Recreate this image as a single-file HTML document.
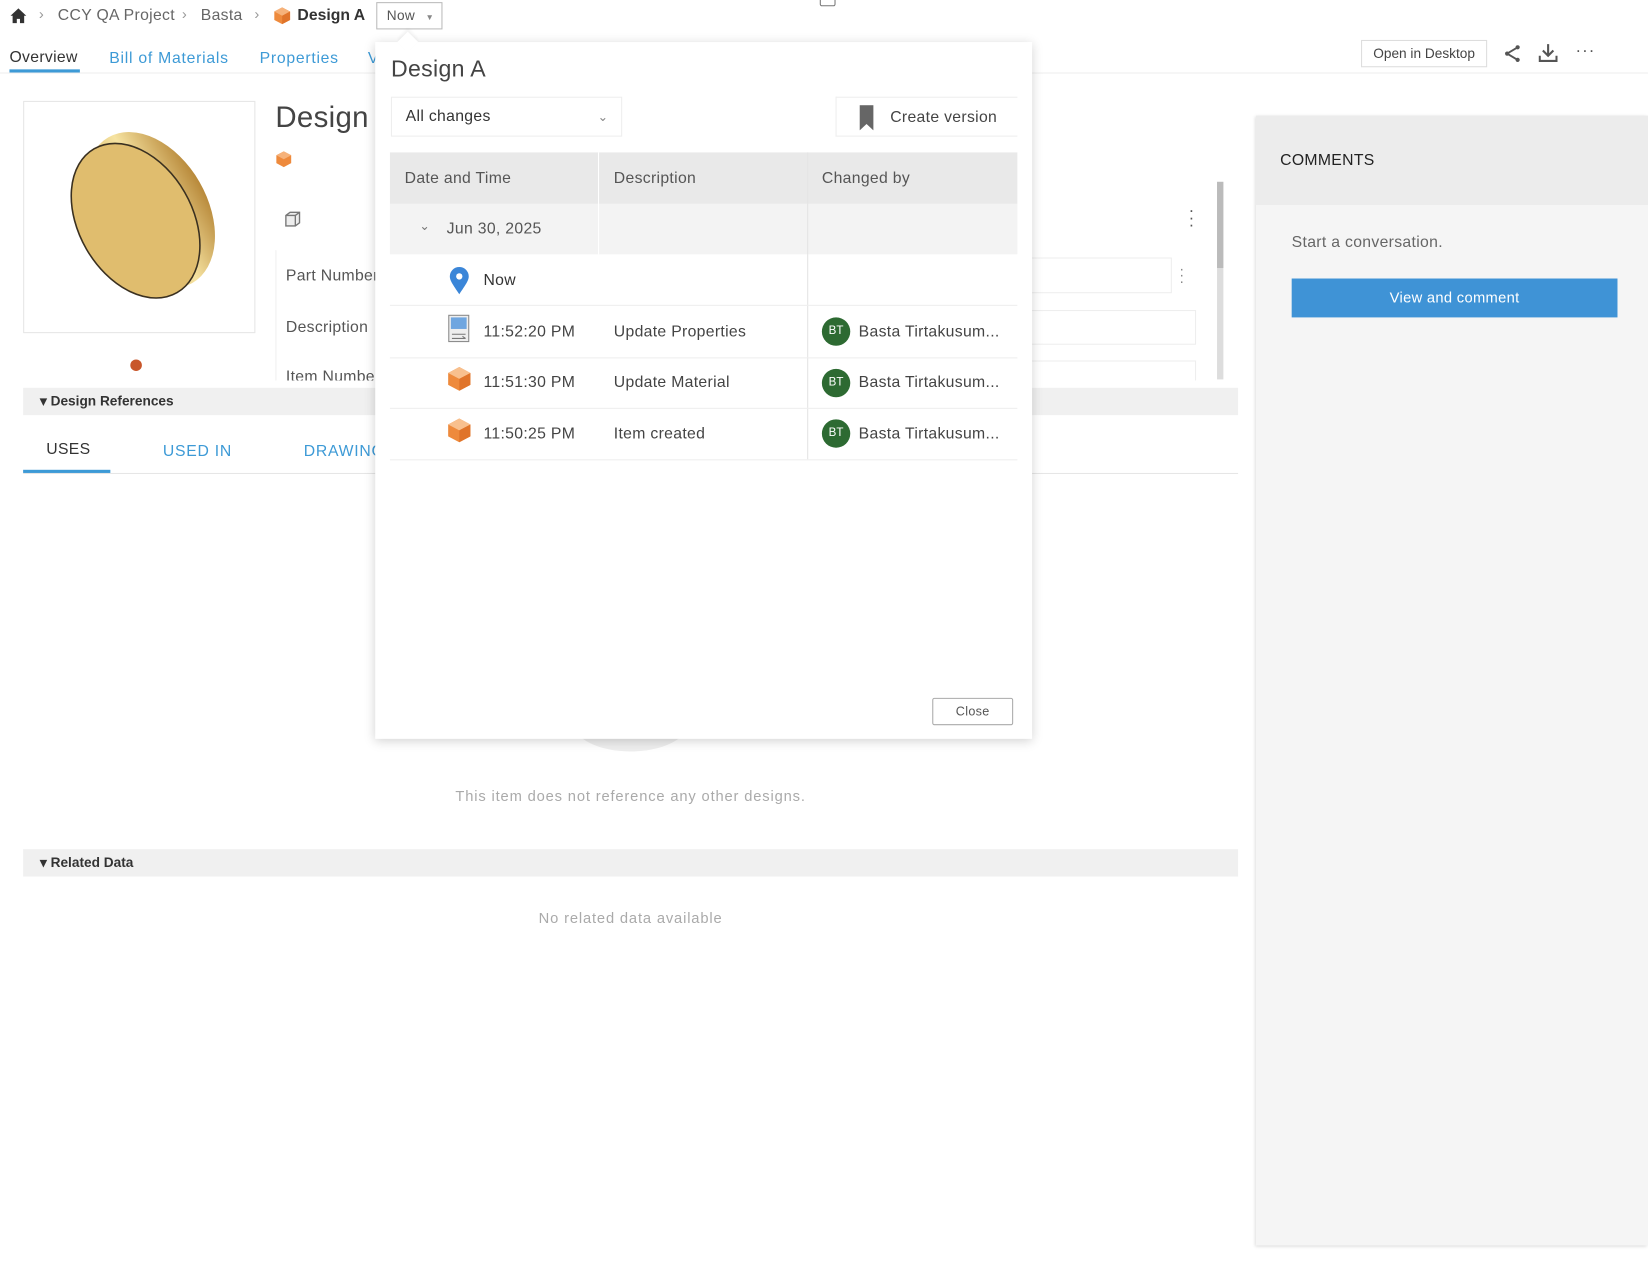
<!DOCTYPE html>
<html><head><meta charset="utf-8"><style>
html,body{margin:0;padding:0;background:#fff;overflow:hidden}
body{width:1648px;height:1266px;position:relative}
#s{position:absolute;left:0;top:0;width:1568px;height:1205px;transform:scale(1.0510);transform-origin:0 0;font-family:"Liberation Sans",sans-serif;color:#3c3c3c;font-size:15px;letter-spacing:0.3px}
.a{position:absolute;white-space:nowrap}
.blue{color:#3d9ad6;letter-spacing:0.7px}
.g{color:#999}
</style></head><body><div id="s">

<!-- breadcrumb -->
<svg class="a" style="left:9px;top:7px" width="17" height="16" viewBox="0 0 17 16"><path d="M8.5 1 L1 8 H3 V15 H7 V11 H10 V15 H14 V8 H16 Z" fill="#333"/></svg>
<div class="a g" style="left:37px;top:5px;font-size:14px">›</div>
<div class="a" style="left:55px;top:6px;color:#666">CCY QA Project</div>
<div class="a g" style="left:173px;top:5px;font-size:14px">›</div>
<div class="a" style="left:191px;top:6px;color:#666">Basta</div>
<div class="a g" style="left:242px;top:5px;font-size:14px">›</div>
<svg class="a" style="left:260px;top:6px" width="17" height="18" viewBox="0 0 17 18"><path d="M8.5 1 L16 5 V13 L8.5 17 L1 13 V5Z" fill="#ee8a3c"/><path d="M8.5 1 L16 5 L8.5 9 L1 5Z" fill="#f6b27a"/><path d="M8.5 9 L16 5 V13 L8.5 17Z" fill="#e0742a"/></svg>
<div class="a" style="left:283px;top:6px;font-weight:bold;color:#333;letter-spacing:0">Design A</div>
<div class="a" style="left:358px;top:2px;width:63px;height:26px;border:1px solid #bbb;box-sizing:border-box;font-size:13px;color:#555;line-height:24px;padding-left:9px">Now <span style="font-size:8px;color:#888;margin-left:6px">▼</span></div>
<div class="a" style="left:780px;top:-2px;width:13px;height:6px;border:1px solid #777;border-radius:2px"></div>

<!-- tabs -->
<div class="a" style="left:0;top:69px;width:1568px;height:1px;background:#eee"></div>
<div class="a" style="left:9px;top:46px;color:#333">Overview</div>
<div class="a" style="left:9px;top:66px;width:67px;height:3px;background:#3d9ad6"></div>
<div class="a blue" style="left:104px;top:47px">Bill of Materials</div>
<div class="a blue" style="left:247px;top:47px">Properties</div>
<div class="a blue" style="left:350px;top:47px">V</div>
<div class="a" style="left:1295px;top:38px;width:120px;height:26px;border:1px solid #ddd;box-sizing:border-box;font-size:13px;line-height:24px;text-align:center;color:#444;letter-spacing:0">Open in Desktop</div>
<svg class="a" style="left:1430px;top:42px" width="18" height="18" viewBox="0 0 18 18"><circle cx="14" cy="3" r="2" fill="#555"/><circle cx="4" cy="9" r="2" fill="#555"/><circle cx="14" cy="15" r="2" fill="#555"/><path d="M14 3 L4 9 L14 15" stroke="#555" stroke-width="1.8" fill="none"/></svg>
<svg class="a" style="left:1464px;top:41px" width="18" height="19" viewBox="0 0 18 19"><path d="M9 1 V12 M4 7 L9 12 L14 7" stroke="#555" stroke-width="2" fill="none"/><path d="M1 12 V17 H17 V12" stroke="#555" stroke-width="2" fill="none"/></svg>
<div class="a" style="left:1499px;top:40px;font-size:16px;color:#555;letter-spacing:1px">···</div>

<!-- thumbnail -->
<div class="a" style="left:22px;top:96px;width:221px;height:221px;border:1px solid #e6e6e6;box-sizing:border-box"></div>
<svg class="a" style="left:55px;top:120px" width="155" height="175" viewBox="0 0 155 175">
<defs><linearGradient id="gr" x1="0" y1="0" x2="1" y2="0"><stop offset="0" stop-color="#c9a24e"/><stop offset="0.55" stop-color="#f6e3a1"/><stop offset="1" stop-color="#b8893a"/></linearGradient></defs>
<ellipse cx="88" cy="80" rx="54" ry="80" transform="rotate(-30 88 80)" fill="url(#gr)"/>
<ellipse cx="74" cy="90" rx="54" ry="79" transform="rotate(-30 74 90)" fill="#e0bd6e" stroke="#3a3020" stroke-width="1.5"/>
</svg>
<div class="a" style="left:124px;top:342px;width:11px;height:11px;border-radius:50%;background:#c8562a"></div>

<div class="a" style="left:262px;top:96px;font-size:28px;color:#444">Design A</div>
<svg class="a" style="left:262px;top:143px" width="16" height="17" viewBox="0 0 17 18"><path d="M8.5 1 L16 5 V13 L8.5 17 L1 13 V5Z" fill="#ee8a3c"/><path d="M8.5 1 L16 5 L8.5 9 L1 5Z" fill="#f6b27a"/></svg>
<svg class="a" style="left:270px;top:200px" width="17" height="17" viewBox="0 0 17 17"><path d="M2 5 L6 2 H15 V12 L11 15 H2Z M2 5 H11 V15 M11 5 L15 2" stroke="#777" stroke-width="1.3" fill="#eee"/></svg>
<div class="a" style="left:272px;top:254px;color:#555">Part Number</div>
<div class="a" style="left:272px;top:303px;color:#555">Description</div>
<div class="a" style="left:272px;top:350px;color:#555;height:12px;overflow:hidden">Item Number</div>
<div class="a" style="left:262px;top:238px;width:1px;height:124px;background:#f0f0f0"></div>
<div class="a" style="left:975px;top:245px;width:140px;height:34px;border:1px solid #eee;box-sizing:border-box"></div>
<div class="a" style="left:975px;top:295px;width:163px;height:33px;border:1px solid #eee;box-sizing:border-box"></div>
<div class="a" style="left:975px;top:343px;width:163px;height:19px;border:1px solid #eee;border-bottom:none;box-sizing:border-box"></div>
<div class="a" style="left:1122px;top:252px;color:#888;font-size:14px;line-height:6px">·<br>·<br>·</div>
<div class="a" style="left:1131px;top:197px;color:#555;font-size:16px;line-height:7px">·<br>·<br>·</div>
<div class="a" style="left:1158px;top:173px;width:6px;height:188px;background:#ddd"></div>
<div class="a" style="left:1158px;top:173px;width:6px;height:82px;background:#bbb"></div>

<!-- Design References -->
<div class="a" style="left:22px;top:369px;width:1156px;height:26px;background:#f0f0f0"></div>
<div class="a" style="left:38px;top:374px;font-size:13px;font-weight:bold;color:#333;letter-spacing:0">▾ Design References</div>
<div class="a" style="left:44px;top:419px;color:#333">USES</div>
<div class="a blue" style="left:155px;top:421px">USED IN</div>
<div class="a blue" style="left:289px;top:421px">DRAWINGS</div>
<div class="a" style="left:22px;top:450px;width:1156px;height:1px;background:#e6e6e6"></div>
<div class="a" style="left:22px;top:447px;width:83px;height:3px;background:#3d9ad6"></div>
<div class="a" style="left:545px;top:660px;width:110px;height:55px;border-radius:50%;background:#eeeeee"></div>
<div class="a" style="left:0;top:749px;width:1200px;text-align:center;color:#aaa;font-size:14px;letter-spacing:0.8px">This item does not reference any other designs.</div>

<div class="a" style="left:22px;top:808px;width:1156px;height:26px;background:#f0f0f0"></div>
<div class="a" style="left:38px;top:813px;font-size:13px;font-weight:bold;color:#333;letter-spacing:0">▾ Related Data</div>
<div class="a" style="left:0;top:865px;width:1200px;text-align:center;color:#aaa;font-size:14px;letter-spacing:0.8px">No related data available</div>

<!-- comments -->
<div class="a" style="left:1195px;top:110px;width:373px;height:1075px;background:#f5f5f5;box-shadow:-1px 1px 3px rgba(0,0,0,.15)"></div>
<div class="a" style="left:1195px;top:110px;width:373px;height:85px;background:#ececec"></div>
<div class="a" style="left:1218px;top:144px;color:#222;font-size:15px">COMMENTS</div>
<div class="a" style="left:1229px;top:222px;color:#666">Start a conversation.</div>
<div class="a" style="left:1229px;top:265px;width:310px;height:37px;background:#3f93d6;color:#fff;text-align:center;line-height:37px;font-size:14px">View and comment</div>

<!-- dialog -->
<div class="a" style="left:357px;top:40px;width:625px;height:663px;background:#fff;box-shadow:0 2px 10px rgba(0,0,0,.18)"></div>
<div class="a" style="left:381px;top:33px;width:14px;height:14px;background:#fff;transform:rotate(45deg);box-shadow:-2px -2px 3px rgba(0,0,0,.06)"></div>
<div class="a" style="left:372px;top:53px;font-size:22px;color:#444">Design A</div>
<div class="a" style="left:372px;top:92px;width:220px;height:38px;border:1px solid #eee;box-sizing:border-box;padding-left:13px;line-height:36px;color:#333">All changes<span style="position:absolute;right:12px;top:0;color:#888;font-size:12px">⌄</span></div>
<div class="a" style="left:795px;top:92px;width:173px;height:38px;border-top:1px solid #eee;border-bottom:1px solid #eee;border-left:1px solid #eee;box-sizing:border-box"></div>
<svg class="a" style="left:817px;top:100px" width="15" height="24" viewBox="0 0 15 24"><path d="M1 0 H14 V24 L7.5 18 L1 24Z" fill="#666"/></svg>
<div class="a" style="left:847px;top:103px;color:#444">Create version</div>

<div class="a" style="left:371px;top:145px;width:597px;height:49px;background:#e9e9e9"></div>
<div class="a" style="left:371px;top:194px;width:597px;height:48px;background:#f3f3f3"></div>
<div class="a" style="left:569px;top:145px;width:1px;height:97px;background:#fff"></div>
<div class="a" style="left:768px;top:145px;width:1px;height:292px;background:#e4e4e4"></div>
<div class="a" style="left:385px;top:161px;color:#555">Date and Time</div>
<div class="a" style="left:584px;top:161px;color:#555">Description</div>
<div class="a" style="left:782px;top:161px;color:#555">Changed by</div>
<div class="a" style="left:399px;top:208px;color:#777;font-size:12px">⌄</div>
<div class="a" style="left:425px;top:209px;color:#555">Jun 30, 2025</div>

<div class="a" style="left:371px;top:290px;width:597px;height:1px;background:#eee"></div>
<div class="a" style="left:371px;top:340px;width:597px;height:1px;background:#eee"></div>
<div class="a" style="left:371px;top:388px;width:597px;height:1px;background:#eee"></div>
<div class="a" style="left:371px;top:437px;width:597px;height:1px;background:#eee"></div>

<svg class="a" style="left:427px;top:253px" width="20" height="28" viewBox="0 0 20 28"><path d="M10 27 C4 18 1 14 1 10 A9 9 0 0 1 19 10 C19 14 16 18 10 27Z" fill="#3b86d8"/><circle cx="10" cy="10" r="3" fill="#fff"/></svg>
<div class="a" style="left:460px;top:258px;color:#333">Now</div>

<svg class="a" style="left:426px;top:299px" width="21" height="27" viewBox="0 0 21 27"><rect x="1" y="1" width="19" height="25" fill="#eee" stroke="#888"/><rect x="3" y="3" width="15" height="11" fill="#6fa6e0"/><path d="M4 19 H17 M4 23 H17 M14 21 L17 23" stroke="#777" fill="none"/></svg>
<div class="a" style="left:460px;top:307px;color:#444">11:52:20 PM</div>
<div class="a" style="left:584px;top:307px;color:#444">Update Properties</div>

<svg class="a" style="left:425px;top:347px" width="24" height="27" viewBox="0 0 17 18"><path d="M8.5 1 L16 5 V13 L8.5 17 L1 13 V5Z" fill="#ee8a3c"/><path d="M8.5 1 L16 5 L8.5 9 L1 5Z" fill="#f8c08e"/><path d="M8.5 9 L16 5 V13 L8.5 17Z" fill="#e0742a"/></svg>
<div class="a" style="left:460px;top:355px;color:#444">11:51:30 PM</div>
<div class="a" style="left:584px;top:355px;color:#444">Update Material</div>

<svg class="a" style="left:425px;top:396px" width="24" height="27" viewBox="0 0 17 18"><path d="M8.5 1 L16 5 V13 L8.5 17 L1 13 V5Z" fill="#ee8a3c"/><path d="M8.5 1 L16 5 L8.5 9 L1 5Z" fill="#f8c08e"/><path d="M8.5 9 L16 5 V13 L8.5 17Z" fill="#e0742a"/></svg>
<div class="a" style="left:460px;top:404px;color:#444">11:50:25 PM</div>
<div class="a" style="left:584px;top:404px;color:#444">Item created</div>

<div class="a" style="left:782px;top:302px;width:27px;height:27px;border-radius:50%;background:#2d6a32;color:#fff;font-size:11px;text-align:center;line-height:27px;letter-spacing:0">BT</div>
<div class="a" style="left:817px;top:307px;color:#444">Basta Tirtakusum...</div>
<div class="a" style="left:782px;top:351px;width:27px;height:27px;border-radius:50%;background:#2d6a32;color:#fff;font-size:11px;text-align:center;line-height:27px;letter-spacing:0">BT</div>
<div class="a" style="left:817px;top:355px;color:#444">Basta Tirtakusum...</div>
<div class="a" style="left:782px;top:399px;width:27px;height:27px;border-radius:50%;background:#2d6a32;color:#fff;font-size:11px;text-align:center;line-height:27px;letter-spacing:0">BT</div>
<div class="a" style="left:817px;top:404px;color:#444">Basta Tirtakusum...</div>

<div class="a" style="left:887px;top:664px;width:77px;height:26px;border:1px solid #aaa;border-radius:2px;box-sizing:border-box;text-align:center;line-height:24px;font-size:12px;color:#555">Close</div>
</div></body></html>
